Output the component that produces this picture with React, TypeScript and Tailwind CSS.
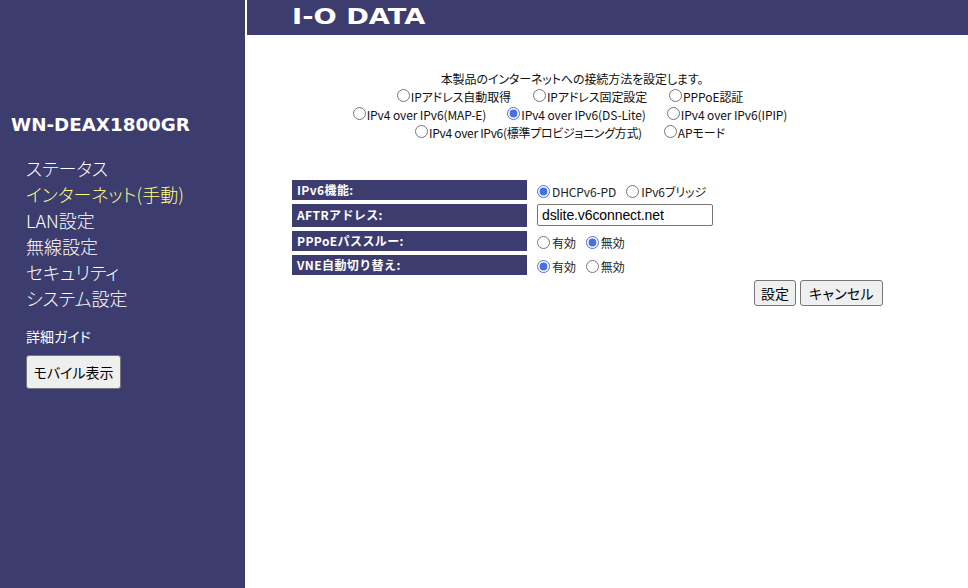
import React from 'react';

const jp = "font-['Noto_Sans_CJK_JP','Noto_Sans',sans-serif] [font-feature-settings:'palt']";

const navItems = ['ステータス', 'インターネット(手動)', 'LAN設定', '無線設定', 'セキュリティ', 'システム設定'];

function Radio({ name, label, checked }: { name: string; label: string; checked?: boolean }) {
  return (
    <label className="inline-flex items-center whitespace-nowrap">
      <input type="radio" name={name} defaultChecked={checked} className="mr-[2px] h-[13px] w-[13px] -translate-y-[1px] accent-[#4a6ee0]" />
      {label}
    </label>
  );
}

function ModeRadio({ label, checked, tight }: { label: string; checked?: boolean; tight?: boolean }) {
  return (
    <label className={`inline-flex items-center whitespace-nowrap ${tight ? 'tracking-[-0.3px]' : 'tracking-[-0.1px]'}`}>
      <input type="radio" name="mode" defaultChecked={checked} className="mr-[1px] h-[13px] w-[13px] -translate-y-[2px] accent-[#4a6ee0]" />
      {label}
    </label>
  );
}

function Row({ label, height, valueClass, children }: { label: string; height: string; valueClass: string; children: React.ReactNode }) {
  return (
    <div className="flex items-start gap-[10px]">
      <div className={`${height} flex w-[235px] items-center bg-[#3c3c6e] pb-[1px] pl-[5px] text-[12px] font-bold tracking-[0.4px] text-white [font-feature-settings:normal]`}>{label}</div>
      <div className={`${valueClass} flex items-center gap-[10px] text-[12px] leading-[16px] tracking-[-0.1px] text-[#222]`}>{children}</div>
    </div>
  );
}

export default function App() {
  return (
    <div className={`${jp} flex h-[588px] w-[968px] overflow-hidden bg-white text-[#111]`}>
      {/* Sidebar */}
      <div className="flex w-[245px] shrink-0 flex-col bg-[#3c3c6e] pt-[112px] text-white">
        <div className="pl-[11px] font-['DejaVu_Sans',sans-serif] text-[18.3px] leading-[26px] font-bold">WN-DEAX1800GR</div>
        <ul className="mt-[17px] pl-[26px] text-[18px] leading-[26px] font-light">
          {navItems.map((item, i) => (
            <li key={item} className={i === 1 ? 'text-[#ffff80]' : ''}>{item}</li>
          ))}
        </ul>
        <div className="mt-[13px] pl-[26px] text-[14px] leading-[24px]">詳細ガイド</div>
        <div className="mt-[7px] pl-[26px]">
          <button className="h-[34px] w-[95px] rounded-[3px] border border-[#767676] bg-[#efefef] text-[14px] text-black">モバイル表示</button>
        </div>
      </div>

      {/* Main */}
      <div className="ml-[2px] flex flex-1 flex-col">
        <div className="flex h-[35px] items-center bg-[#3c3c6e] pl-[45px]">
          <span className="origin-left scale-x-[1.33] font-['DejaVu_Sans',sans-serif] text-[20.5px] leading-none font-bold text-white">I-O DATA</span>
        </div>

        <div className="w-[646px] pt-[35px] text-center text-[12px] leading-[18px]">
          <div className="pl-[4px] tracking-[-0.1px]">本製品のインターネットへの接続方法を設定します。</div>
          <div className="flex justify-center gap-[22px]">
            <ModeRadio label="IPアドレス自動取得" />
            <ModeRadio label="IPアドレス固定設定" />
            <ModeRadio label="PPPoE認証" />
          </div>
          <div className="flex justify-center gap-[21px]">
            <ModeRadio label="IPv4 over IPv6(MAP-E)" />
            <ModeRadio label="IPv4 over IPv6(DS-Lite)" checked />
            <ModeRadio label="IPv4 over IPv6(IPIP)" />
          </div>
          <div className="flex justify-center gap-[22px]">
            <ModeRadio label="IPv4 over IPv6(標準プロビジョニング方式)" tight />
            <ModeRadio label="APモード" />
          </div>
        </div>

        <div className="mt-[38px] ml-[45px] flex w-[591px] flex-col gap-[4px]">
          <Row label="IPv6機能:" height="h-[20px]" valueClass="mt-[4px] h-[16px]">
            <Radio name="ipv6" label="DHCPv6-PD" checked />
            <Radio name="ipv6" label="IPv6ブリッジ" />
          </Row>
          <Row label="AFTRアドレス:" height="h-[23px]" valueClass="h-[22px]">
            <input
              defaultValue="dslite.v6connect.net"
              className="h-[22px] w-[176px] rounded-[2px] border border-[#767676] px-[4px] font-['Liberation_Sans',sans-serif] text-[14px] text-black"
            />
          </Row>
          <Row label="PPPoEパススルー:" height="h-[20px]" valueClass="mt-[4px] h-[16px]">
            <Radio name="pppoe" label="有効" />
            <Radio name="pppoe" label="無効" checked />
          </Row>
          <Row label="VNE自動切り替え:" height="h-[20px]" valueClass="mt-[4px] h-[16px]">
            <Radio name="vne" label="有効" checked />
            <Radio name="vne" label="無効" />
          </Row>
          <div className="mt-[1px] flex justify-end gap-[4px]">
            <button className="h-[26px] w-[42px] rounded-[3px] border border-[#767676] bg-[#efefef] text-[14px] text-black">設定</button>
            <button className="h-[26px] w-[83px] rounded-[3px] border border-[#767676] bg-[#efefef] text-[14px] tracking-[0.3px] text-black">キャンセル</button>
          </div>
        </div>
      </div>
    </div>
  );
}
